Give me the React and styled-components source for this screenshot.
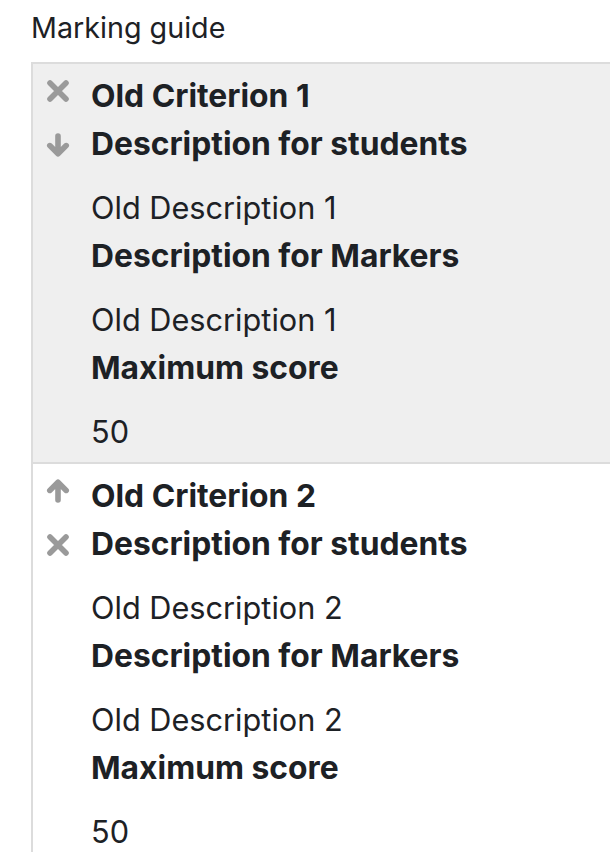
import React from "react";
import styled, { createGlobalStyle } from "styled-components";

const Global = createGlobalStyle`
  html, body { margin: 0; padding: 0; background: #fff; overflow: hidden; }
  body {
    font-family: "Inter", "Liberation Sans", Arial, sans-serif;
    color: #1d2125;
    font-size: 30px;
    line-height: 48px;
  }
`;

const Page = styled.div`
  padding: 4px 0 0 31px;
`;

const Title = styled.h2`
  margin: 0 0 10px;
  font-size: 28.7px;
  font-weight: 400;
  line-height: 48px;
`;

const Guide = styled.div`
  border-left: 2px solid #dcdcdc;
  border-top: 2px solid #dcdcdc;
  width: 700px;
`;

const Criterion = styled.div`
  display: grid;
  grid-template-columns: 58px 1fr;
  background: ${(p) => (p.$shaded ? "#efefef" : "#fff")};
  padding: 8px 0 6px;
  & + & {
    border-top: 2px solid #dcdcdc;
  }
`;

const Controls = styled.div`
  display: flex;
  flex-direction: column;
  gap: 30px;
  padding: 7px 0 0 13px;
  color: #9a9a9a;
`;

const IconBox = styled.svg`
  display: block;
  width: 24px;
  height: 24px;
`;

const Body = styled.div`
  display: flex;
  flex-direction: column;
`;

const Label = styled.div`
  font-weight: 700;
  font-size: 31.8px;
  line-height: 48px;
`;

const Value = styled.div`
  margin-top: 16px;
  font-size: 30.7px;
  line-height: 48px;
`;

const Cross = () => (
  <IconBox viewBox="0 0 24 24">
    <path d="M4 4 L20 20 M20 4 L4 20" stroke="currentColor" strokeWidth="5.6" strokeLinecap="round" fill="none" />
  </IconBox>
);

const Down = () => (
  <IconBox viewBox="0 0 24 24">
    <path d="M12 3 L12 20.5 M3.8 12.6 L12 20.8 L20.2 12.6" stroke="currentColor" strokeWidth="5.6" strokeLinecap="round" strokeLinejoin="round" fill="none" />
  </IconBox>
);

const Up = () => (
  <IconBox viewBox="0 0 24 24">
    <path d="M12 21 L12 3.5 M3.8 11.4 L12 3.2 L20.2 11.4" stroke="currentColor" strokeWidth="5.6" strokeLinecap="round" strokeLinejoin="round" fill="none" />
  </IconBox>
);

const iconMap = { delete: Cross, down: Down, up: Up };

const criteria = [
  { name: "Old Criterion 1", desc: "Old Description 1", marker: "Old Description 1", score: "50", icons: ["delete", "down"], shaded: true },
  { name: "Old Criterion 2", desc: "Old Description 2", marker: "Old Description 2", score: "50", icons: ["up", "delete"], shaded: false },
];

export default function App() {
  return (
    <>
      <Global />
      <Page>
        <Title>Marking guide</Title>
        <Guide>
          {criteria.map((c) => (
            <Criterion key={c.name} $shaded={c.shaded}>
              <Controls>
                {c.icons.map((k) => {
                  const I = iconMap[k];
                  return <I key={k} />;
                })}
              </Controls>
              <Body>
                <Label>{c.name}</Label>
                <Label>Description for students</Label>
                <Value>{c.desc}</Value>
                <Label>Description for Markers</Label>
                <Value>{c.marker}</Value>
                <Label>Maximum score</Label>
                <Value>{c.score}</Value>
              </Body>
            </Criterion>
          ))}
        </Guide>
      </Page>
    </>
  );
}
